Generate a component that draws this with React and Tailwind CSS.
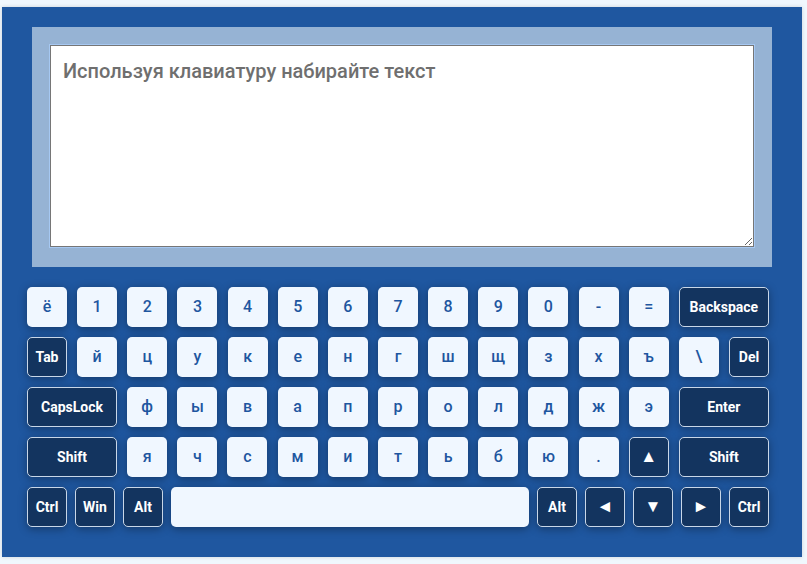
import React from 'react';
import { clsx } from 'clsx';

const Key = ({ label, dark, wide, grow, arrow }) => (
  <div
    className={clsx(
      'h-10 flex items-center justify-center rounded-[5px] shadow-[0_2px_8px_rgba(0,0,0,0.35)] select-none',
      wide ? 'w-[90px]' : grow ? 'flex-1' : 'w-10',
      dark
        ? 'bg-[#13345f] border border-[#c9d7e8] text-white font-bold'
        : 'bg-[#f0f7ff] text-[#1e56a0] text-[16px] font-medium',
      dark && (arrow ? 'text-[17px]' : 'text-[14px]')
    )}
  >
    {label}
  </div>
);

const rows = [
  [
    ...['ё', '1', '2', '3', '4', '5', '6', '7', '8', '9', '0', '-', '='].map((l) => ({ l })),
    { l: 'Backspace', d: true, w: true },
  ],
  [
    { l: 'Tab', d: true },
    ...['й', 'ц', 'у', 'к', 'е', 'н', 'г', 'ш', 'щ', 'з', 'х', 'ъ', '\\'].map((l) => ({ l })),
    { l: 'Del', d: true },
  ],
  [
    { l: 'CapsLock', d: true, w: true },
    ...['ф', 'ы', 'в', 'а', 'п', 'р', 'о', 'л', 'д', 'ж', 'э'].map((l) => ({ l })),
    { l: 'Enter', d: true, w: true },
  ],
  [
    { l: 'Shift', d: true, w: true },
    ...['я', 'ч', 'с', 'м', 'и', 'т', 'ь', 'б', 'ю', '.'].map((l) => ({ l })),
    { l: '▲', d: true, a: true },
    { l: 'Shift', d: true, w: true },
  ],
];

const bottom = [
  { l: 'Ctrl', d: true },
  { l: 'Win', d: true },
  { l: 'Alt', d: true },
  { l: '', g: true },
  { l: 'Alt', d: true },
  { l: '◄', d: true, a: true },
  { l: '▼', d: true, a: true },
  { l: '►', d: true, a: true },
  { l: 'Ctrl', d: true },
];

export default function App() {
  return (
    <div className="min-h-[564px] bg-[#f0f7fd] pt-[7px] pl-[2px] pr-[5px] font-['Roboto',sans-serif]">
      <div className="bg-[#1f57a0] pl-[25px] pr-[33px] pt-5 pb-[30px] shadow-[0_0_4px_rgba(0,0,0,0.15)]">
        <div className="ml-[5px] -mr-[3px] mb-5 bg-[#96b3d4] px-[18px] pt-[18px] pb-5">
          <textarea
            className="block w-full h-[202px] bg-white border border-[#767676] outline outline-1 outline-[#a6c8f2] px-3 pt-[10px] pb-2 text-[20px] font-medium text-[#333] placeholder:text-[#6f6f6f] resize-y"
            placeholder="Используя клавиатуру набирайте текст"
          />
        </div>
        <div className="flex flex-col gap-[10px]">
          {rows.map((row, i) => (
            <div key={i} className="flex justify-between">
              {row.map((k, j) => (
                <Key key={j} label={k.l} dark={k.d} wide={k.w} arrow={k.a} />
              ))}
            </div>
          ))}
          <div className="flex gap-2">
            {bottom.map((k, j) => (
              <Key key={j} label={k.l} dark={k.d} grow={k.g} arrow={k.a} />
            ))}
          </div>
        </div>
      </div>
    </div>
  );
}
